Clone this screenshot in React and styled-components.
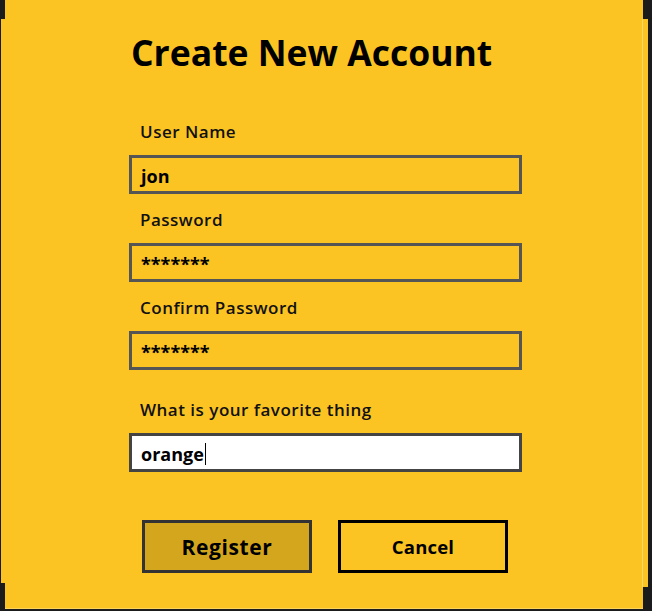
import React from 'react';
import styled, { createGlobalStyle } from 'styled-components';

const GlobalStyle = createGlobalStyle`
  html, body {
    margin: 0;
    padding: 0;
    background: #1b1b1b;
  }
  body {
    font-family: "Open Sans", "DejaVu Sans", sans-serif;
  }
`;

const Page = styled.div`
  width: 652px;
  height: 611px;
  background: #1b1b1b;
  display: flex;
  align-items: flex-start;
  overflow: hidden;
`;

const Panel = styled.div`
  position: relative;
  box-sizing: border-box;
  width: 638px;
  height: 609px;
  margin-left: 5px;
  background: #fcc423;
  border-bottom: 1px solid #fdd35a;
  padding: 30px 0 0 124px;

  &::before {
    content: '';
    position: absolute;
    left: -4px;
    top: 19px;
    width: 4px;
    height: 564px;
    background: #fcc423;
  }

  &::after {
    content: '';
    position: absolute;
    right: -5px;
    top: 19px;
    width: 5px;
    height: 568px;
    background: #fcc423;
    border-left: 1px solid #fdd96b;
  }
`;

const Form = styled.form`
  width: 393px;
  display: flex;
  flex-direction: column;
`;

const Title = styled.h1`
  margin: 0 0 48px 2px;
  font-size: 35.5px;
  line-height: 44px;
  font-weight: 700;
  color: #000;
`;

const Group = styled.div`
  display: flex;
  flex-direction: column;
  margin-top: ${p => p.$gap || 0}px;
`;

const Label = styled.label`
  margin: 0 0 13px 11px;
  font-size: 17px;
  line-height: 20px;
  font-weight: 600;
  letter-spacing: 0.5px;
  color: #111;
`;

const Field = styled.div`
  box-sizing: border-box;
  height: 39px;
  border: 3px solid ${p => (p.$active ? '#444' : '#555')};
  background: ${p => (p.$active ? '#fff' : 'transparent')};
  padding: 2px 9px 0;
  display: flex;
  align-items: center;
  font-size: 18px;
  font-weight: 700;
  color: #000;
  margin-bottom: 16px;
`;

const Caret = styled.span`
  display: inline-block;
  width: 1px;
  height: 22px;
  background: #000;
  margin-left: 1px;
`;

const Actions = styled.div`
  display: flex;
  gap: 26px;
  margin: 32px 0 0 13px;
`;

const Button = styled.button`
  box-sizing: border-box;
  width: 170px;
  height: 53px;
  border: 3px solid ${p => (p.$primary ? '#333' : '#000')};
  background: ${p => (p.$primary ? '#d4a61e' : 'transparent')};
  font-family: "Open Sans", "DejaVu Sans", sans-serif;
  font-size: ${p => (p.$primary ? 21 : 18.5)}px;
  letter-spacing: ${p => (p.$primary ? 0.6 : 0.2)}px;
  font-weight: 700;
  color: #000;
  padding: 0;
  cursor: pointer;
`;

const fields = [
  { label: 'User Name', value: 'jon' },
  { label: 'Password', value: '*******' },
  { label: 'Confirm Password', value: '*******' },
  { label: 'What is your favorite thing', value: 'orange', active: true, gap: 14 },
];

export default function App() {
  return (
    <Page>
      <GlobalStyle />
      <Panel>
        <Form onSubmit={e => e.preventDefault()}>
          <Title>Create New Account</Title>
          {fields.map(f => (
            <Group key={f.label} $gap={f.gap}>
              <Label>{f.label}</Label>
              <Field $active={f.active}>
                {f.value}
                {f.active && <Caret />}
              </Field>
            </Group>
          ))}
          <Actions>
            <Button type="submit" $primary>Register</Button>
            <Button type="button">Cancel</Button>
          </Actions>
        </Form>
      </Panel>
    </Page>
  );
}
